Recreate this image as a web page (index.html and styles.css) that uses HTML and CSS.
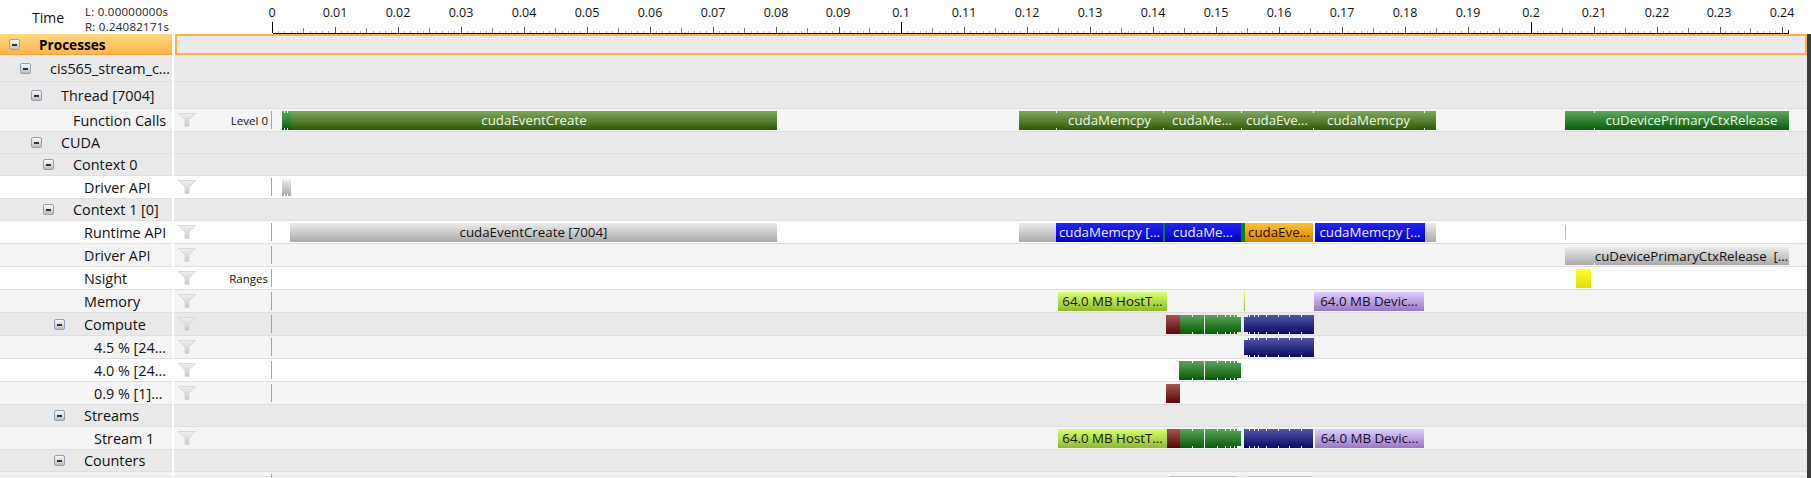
FILE: index.html
```html
<!DOCTYPE html>
<html lang="en">
<head>
<meta charset="utf-8">
<title>Timeline</title>
<link rel="stylesheet" href="styles.css">
</head>
<body>
<svg class="defs" width="0" height="0">
  <defs>
    <linearGradient id="fg" x1="0" y1="0" x2="0" y2="1"><stop offset="0" stop-color="#f0f0f0"/><stop offset="1" stop-color="#c8c8c8"/></linearGradient>
    <symbol id="funnel" viewBox="0 0 18 14"><path d="M0.5 0.5H17.5L11 7V13.5L7 13.5V7Z" fill="url(#fg)" stroke="#d8d8d8"/></symbol>
    <g id="dec">
      <path d="M6.5 31v2M12.5 31v2M19.5 31v2M25.5 31v2M38.5 31v2M44.5 31v2M50.5 31v2M56.5 31v2" stroke="#b0b0b0"/>
      <path d="M31.5 28v5" stroke="#808080"/>
      <path d="M63 27v6" stroke="#555"/>
    </g>
  </defs>
</svg>
<header class="head">
  <div class="time">Time</div>
  <div class="range"><div>L: 0.00000000s</div><div>R: 0.24082171s</div></div>
  <div class="axis">
    <svg class="ticks" width="1539" height="34" shape-rendering="crispEdges">
      <path d="M0.5 33H1517" stroke="#000"/>
      <path d="M0.5 22v11" stroke="#000"/>
      <use href="#dec" x="0"/><use href="#dec" x="63"/><use href="#dec" x="126"/><use href="#dec" x="189"/><use href="#dec" x="252"/><use href="#dec" x="315"/>
      <use href="#dec" x="378"/><use href="#dec" x="441"/><use href="#dec" x="504"/><use href="#dec" x="566"/><use href="#dec" x="629"/><use href="#dec" x="692"/>
      <use href="#dec" x="755"/><use href="#dec" x="818"/><use href="#dec" x="881"/><use href="#dec" x="944"/><use href="#dec" x="1007"/><use href="#dec" x="1070"/>
      <use href="#dec" x="1133"/><use href="#dec" x="1196"/><use href="#dec" x="1259"/><use href="#dec" x="1322"/><use href="#dec" x="1385"/><use href="#dec" x="1447"/>
      <path d="M629.5 22v11M1259.5 22v11" stroke="#000"/>
      <path d="M1516.5 30v3" stroke="#000"/>
    </svg>
    <span class="lab" style="left:0px">0</span><span class="lab" style="left:63px">0.01</span><span class="lab" style="left:126px">0.02</span><span class="lab" style="left:189px">0.03</span><span class="lab" style="left:252px">0.04</span><span class="lab" style="left:315px">0.05</span><span class="lab" style="left:378px">0.06</span><span class="lab" style="left:441px">0.07</span><span class="lab" style="left:504px">0.08</span><span class="lab" style="left:566px">0.09</span><span class="lab" style="left:629px">0.1</span><span class="lab" style="left:692px">0.11</span><span class="lab" style="left:755px">0.12</span><span class="lab" style="left:818px">0.13</span><span class="lab" style="left:881px">0.14</span><span class="lab" style="left:944px">0.15</span><span class="lab" style="left:1007px">0.16</span><span class="lab" style="left:1070px">0.17</span><span class="lab" style="left:1133px">0.18</span><span class="lab" style="left:1196px">0.19</span><span class="lab" style="left:1259px">0.2</span><span class="lab" style="left:1322px">0.21</span><span class="lab" style="left:1385px">0.22</span><span class="lab" style="left:1447px">0.23</span><span class="lab" style="left:1510px">0.24</span>
  </div>
</header>
<main class="rows">
  <div class="row processes">
    <div class="name l0"><span class="tog"></span><b>Processes</b></div>
    <div class="lane"></div>
  </div>
  <div class="row tall sec">
    <div class="name l1"><span class="tog"></span>cis565_stream_c…</div>
    <div class="lane"></div>
  </div>
  <div class="row tall sec">
    <div class="name l2"><span class="tog"></span>Thread [7004]</div>
    <div class="lane"></div>
  </div>
  <div class="row alt">
    <div class="name leaf l3">Function Calls</div>
    <div class="lane">
      <div class="ctl"><svg class="fil"><use href="#funnel"/></svg><span class="tag">Level 0</span></div>
      <div class="track">
        <div class="bar green" style="left:10px;width:9px"><i class="n" style="left:2px"></i><i class="n" style="left:5px"></i></div>
        <div class="bar olive lt" style="left:19px;width:486px">cudaEventCreate</div>
        <div class="bar olive" style="left:747px;width:37px"></div>
        <div class="bar olive lt seg" style="left:784px;width:107px">cudaMemcpy</div>
        <div class="bar olive lt seg" style="left:891px;width:78px">cudaMe…</div>
        <div class="bar olive lt seg" style="left:969px;width:72px">cudaEve…</div>
        <div class="bar olive lt seg" style="left:1041px;width:111px">cudaMemcpy</div>
        <div class="bar olive seg" style="left:1152px;width:12px"></div>
        <div class="bar green" style="left:1293px;width:29px"></div>
        <div class="bar green lt seg" style="left:1322px;width:195px">cuDevicePrimaryCtxRelease</div>
      </div>
    </div>
  </div>
  <div class="row sec">
    <div class="name l2"><span class="tog"></span>CUDA</div>
    <div class="lane"></div>
  </div>
  <div class="row sec">
    <div class="name l3"><span class="tog"></span>Context 0</div>
    <div class="lane"></div>
  </div>
  <div class="row wht">
    <div class="name leaf l4">Driver API</div>
    <div class="lane">
      <div class="ctl"><svg class="fil"><use href="#funnel"/></svg></div>
      <div class="track">
        <div class="bar gray low" style="left:10px;width:9px"><i class="n" style="left:2px"></i><i class="n" style="left:5px"></i></div>
      </div>
    </div>
  </div>
  <div class="row sec">
    <div class="name l3"><span class="tog"></span>Context 1 [0]</div>
    <div class="lane"></div>
  </div>
  <div class="row wht">
    <div class="name leaf l4">Runtime API</div>
    <div class="lane">
      <div class="ctl"><svg class="fil"><use href="#funnel"/></svg></div>
      <div class="track">
        <div class="bar gray" style="left:18px;width:487px">cudaEventCreate [7004]</div>
        <div class="bar gray" style="left:747px;width:37px"></div>
        <div class="bar blue lt" style="left:784px;width:107px">cudaMemcpy […</div>
        <div class="bar sliver" style="left:891px;width:2px"></div>
        <div class="bar blue lt" style="left:893px;width:76px">cudaMe…</div>
        <div class="bar sliver" style="left:969px;width:4px"></div>
        <div class="bar orange" style="left:973px;width:68px">cudaEve…</div>
        <div class="bar blue lt" style="left:1043px;width:110px">cudaMemcpy […</div>
        <div class="bar gray" style="left:1153px;width:11px"></div>
        <div class="bar hair" style="left:1293px;width:1px"></div>
      </div>
    </div>
  </div>
  <div class="row alt">
    <div class="name leaf l4">Driver API</div>
    <div class="lane">
      <div class="ctl"><svg class="fil"><use href="#funnel"/></svg></div>
      <div class="track">
        <div class="bar gray mid" style="left:1293px;width:29px"></div>
        <div class="bar gray mid seg" style="left:1322px;width:195px">cuDevicePrimaryCtxRelease &nbsp;[…</div>
      </div>
    </div>
  </div>
  <div class="row wht">
    <div class="name leaf l4">Nsight</div>
    <div class="lane">
      <div class="ctl"><svg class="fil"><use href="#funnel"/></svg><span class="tag">Ranges</span></div>
      <div class="track">
        <div class="bar yellow" style="left:1304px;width:15px"></div>
      </div>
    </div>
  </div>
  <div class="row alt">
    <div class="name leaf l4">Memory</div>
    <div class="lane">
      <div class="ctl"><svg class="fil"><use href="#funnel"/></svg></div>
      <div class="track">
        <div class="bar lime" style="left:786px;width:109px">64.0 MB HostT…</div>
        <div class="bar lime" style="left:972px;width:1px"></div>
        <div class="bar purple" style="left:1042px;width:110px">64.0 MB Devic…</div>
      </div>
    </div>
  </div>
  <div class="row sec">
    <div class="name l4b"><span class="tog"></span>Compute</div>
    <div class="lane">
      <div class="ctl"><svg class="fil"><use href="#funnel"/></svg></div>
      <div class="track">
        <div class="bar red" style="left:894px;width:14px"></div>
        <div class="bar dgreen" style="left:908px;width:24px"><i class="n" style="left:12px"></i></div>
        <div class="bar dgreen" style="left:933px;width:36px"><i class="n" style="left:12px"></i><i class="n" style="left:20px"></i><i class="n" style="left:25px"></i><i class="n" style="left:29px"></i><i class="n" style="left:32px;width:4px"></i></div>
        <div class="bar navy" style="left:972px;width:70px"><i class="n" style="left:0;width:4px"></i><i class="n" style="left:5px"></i><i class="n" style="left:10px"></i><i class="n" style="left:14px"></i><i class="n" style="left:22px"></i><i class="n" style="left:34px"></i><i class="n" style="left:45px"></i><i class="n" style="left:57px"></i></div>
      </div>
    </div>
  </div>
  <div class="row alt">
    <div class="name leaf l5">4.5 % [24…</div>
    <div class="lane">
      <div class="ctl"><svg class="fil"><use href="#funnel"/></svg></div>
      <div class="track">
        <div class="bar navy" style="left:972px;width:70px"><i class="n" style="left:0;width:4px"></i><i class="n" style="left:5px"></i><i class="n" style="left:10px"></i><i class="n" style="left:14px"></i><i class="n" style="left:22px"></i><i class="n" style="left:34px"></i><i class="n" style="left:45px"></i><i class="n" style="left:57px"></i></div>
      </div>
    </div>
  </div>
  <div class="row wht">
    <div class="name leaf l5">4.0 % [24…</div>
    <div class="lane">
      <div class="ctl"><svg class="fil"><use href="#funnel"/></svg></div>
      <div class="track">
        <div class="bar dgreen" style="left:907px;width:25px"><i class="n" style="left:13px"></i></div>
        <div class="bar dgreen" style="left:933px;width:36px"><i class="n" style="left:12px"></i><i class="n" style="left:20px"></i><i class="n" style="left:25px"></i><i class="n" style="left:29px"></i><i class="n" style="left:32px;width:4px"></i></div>
      </div>
    </div>
  </div>
  <div class="row alt">
    <div class="name leaf l5">0.9 % [1]…</div>
    <div class="lane">
      <div class="ctl"><svg class="fil"><use href="#funnel"/></svg></div>
      <div class="track">
        <div class="bar red" style="left:894px;width:14px"></div>
      </div>
    </div>
  </div>
  <div class="row sec">
    <div class="name l4b"><span class="tog"></span>Streams</div>
    <div class="lane"></div>
  </div>
  <div class="row alt">
    <div class="name leaf l5">Stream 1</div>
    <div class="lane">
      <div class="ctl nodiv"><svg class="fil"><use href="#funnel"/></svg></div>
      <div class="track">
        <div class="bar lime" style="left:786px;width:109px">64.0 MB HostT…</div>
        <div class="bar red" style="left:895px;width:13px"></div>
        <div class="bar dgreen" style="left:908px;width:24px"><i class="n" style="left:12px"></i></div>
        <div class="bar dgreen" style="left:933px;width:36px"><i class="n" style="left:12px"></i><i class="n" style="left:20px"></i><i class="n" style="left:25px"></i><i class="n" style="left:29px"></i><i class="n" style="left:32px;width:4px"></i></div>
        <div class="bar navy" style="left:972px;width:69px"><i class="n" style="left:5px"></i><i class="n" style="left:10px"></i><i class="n" style="left:14px"></i><i class="n" style="left:22px"></i><i class="n" style="left:34px"></i><i class="n" style="left:45px"></i><i class="n" style="left:57px"></i></div>
        <div class="bar purple" style="left:1043px;width:109px">64.0 MB Devic…</div>
      </div>
    </div>
  </div>
  <div class="row sec">
    <div class="name l4b"><span class="tog"></span>Counters</div>
    <div class="lane"></div>
  </div>
  <div class="row tail alt">
    <div class="name"></div>
    <div class="lane">
      <div class="ctl"></div>
      <div class="track">
        <div class="bar stub" style="left:898px;width:66px"></div>
        <div class="bar stub" style="left:976px;width:64px"></div>
      </div>
    </div>
  </div>
</main>
</body>
</html>
```
FILE: styles.css
```css
* { box-sizing: border-box; }
html, body { margin: 0; padding: 0; height: 100%; overflow: hidden; background: #fff; }
body {
  font-family: "Open Sans", "Noto Sans", "Liberation Sans", sans-serif;
  font-size: 14.4px;
  color: #111;
}
.defs { position: absolute; }

.head { display: flex; height: 34px; }
.time { width: 85px; padding: 8px 0 0 32px; font-size: 14px; color: #111; }
.range { width: 187px; padding-top: 4px; font-size: 11.5px; line-height: 15px; letter-spacing: 0.25px; color: #222; }
.axis { position: relative; flex: 1; }
.ticks { position: absolute; left: 0; top: 0; display: block; }
.lab { position: absolute; top: 4px; font-size: 12.5px; line-height: 17px; transform: translateX(-50%); color: #111; }

.rows { width: 1811px; border-right: 4px solid #3c3c3c; height: 444px; overflow: hidden; }
.row { --bg: #e9e9e9; display: flex; height: 23px; }
.row.alt { --bg: #f4f4f4; }
.row.wht { --bg: #fff; }
.row.sec { height: 22px; }
.row.tall { height: 27px; }
.row.sec:has(.ctl) { height: 23px; }
.row.tail { height: 5px; }

.name {
  display: flex; align-items: center; gap: 0;
  width: 172px; margin-right: 2px; flex: none;
  background: var(--bg); border-bottom: 1px solid #dfdfdf;
  white-space: nowrap; overflow: hidden;
}
.tog {
  flex: none; width: 11px; height: 11px; margin-right: 19px; position: relative;
  border: 1px solid #8ba2ba; border-radius: 2px;
  background: linear-gradient(#fbfbfb, #bcbcbc);
}
.tog::after { content: ""; position: absolute; left: 2px; right: 2px; top: 4px; height: 2px; background: #333; }
.l0 { padding-left: 9px; }
.l1 { padding-left: 20px; }
.l2 { padding-left: 31px; }
.l3 { padding-left: 43px; }
.l4b { padding-left: 54px; }
.leaf.l3 { padding-left: 73px; }
.leaf.l4 { padding-left: 84px; }
.leaf.l5 { padding-left: 94px; }

.lane {
  display: flex; flex: 1; min-width: 0; position: relative;
  background: var(--bg); border-bottom: 1px solid #dfdfdf;
}
.ctl {
  flex: none; width: 98px; height: 18px; margin-top: 2px; padding-left: 4px; padding-right: 3px;
  display: flex; align-items: center; justify-content: space-between;
  border-right: 1px solid #a4a4a4;
}
.ctl.nodiv { border-right-color: transparent; }
.fil { width: 18px; height: 14px; flex: none; }
.tag { font-size: 11.5px; color: #111; }
.track { position: relative; flex: 1; min-width: 0; }

.processes { height: 21px; }
.processes .name {
  background: linear-gradient(#ffd880, #fdb44a);
  border-bottom: 1px solid #f2a642;
}
.processes b { font-size: 13.6px; font-weight: 700; color: #000; }
.processes .lane { border: 2px solid #f9b04c; margin-left: 1px; background: #e9e9e9; }

.bar {
  position: absolute; top: 2px; height: 19px;
  display: flex; align-items: center; justify-content: center;
  font-size: 13.3px; line-height: 19px; white-space: nowrap; overflow: hidden; color: #111;
}
.lt { color: #eef5e8; }
.bar.low { top: 3px; height: 17px; }
.bar.mid { top: 3px; height: 18px; }
.olive { background: linear-gradient(#80a85c, #2f5a0a); }
.green { background: linear-gradient(#5fa95f, #075a07); }
.gray { background: linear-gradient(#ececec, #a9a9a9); }
.blue { background: linear-gradient(#2222ff, #0000c8); color: #eeeeff; }
.orange { background: linear-gradient(#ffc42a, #d78000); color: #1e0f00; }
.lime { background: linear-gradient(#d9ff70, #8fb92e); color: #141a04; }
.purple { background: linear-gradient(#dfcdff, #9878c2); color: #140e24; }
.red { background: linear-gradient(#a55555, #560808); }
.dgreen { background: linear-gradient(#5aa45a, #075a07); }
.navy { background: linear-gradient(#5353aa, #0a0a60); }
.yellow { background: linear-gradient(#ffff30, #dede00); }
.sliver { background: #108010; }
.hair { top: 4px; height: 15px; background: #b8b8b8; }
.bar.stub { top: 4px; height: 1px; background: #c4c4c4; }

.n, .seg::before {
  position: absolute; top: 0; bottom: 0; width: 1px;
  background: linear-gradient(var(--bg) 2px, transparent 2px, transparent calc(100% - 2px), var(--bg) calc(100% - 2px));
}
.seg::before { content: ""; left: 0; }
```
